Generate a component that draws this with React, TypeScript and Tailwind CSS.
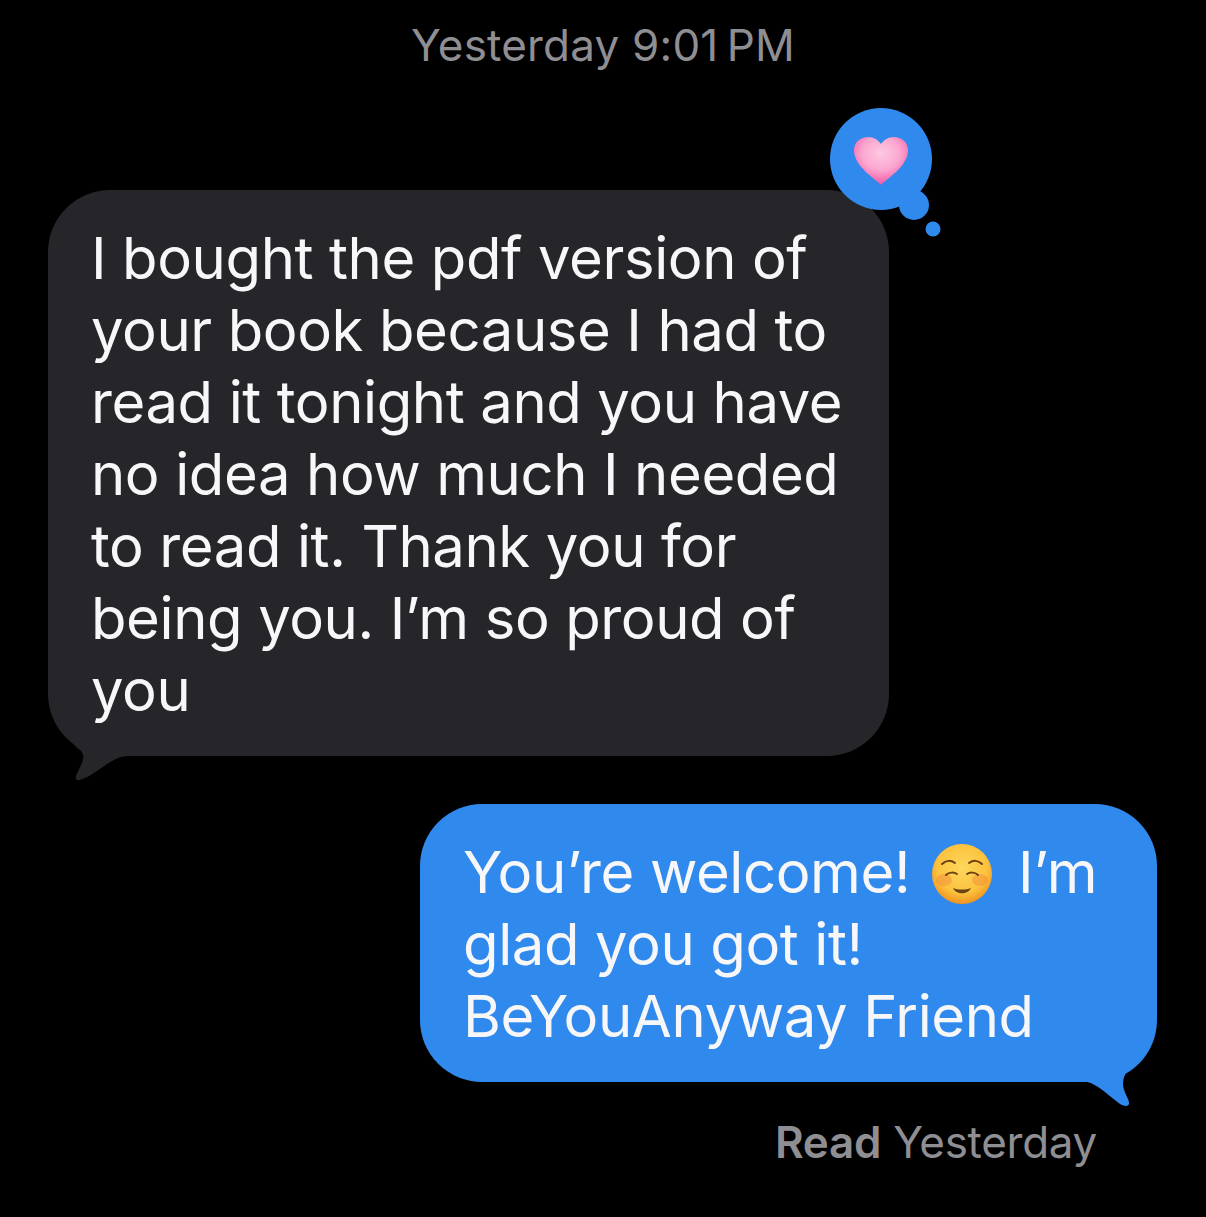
const messageFont = "font-['Inter','Liberation_Sans',sans-serif]"

function IncomingTail() {
  return (
    <svg className="absolute left-0 top-[500px] h-[100px] w-[100px]" viewBox="0 0 100 100" fill="#25252a">
      <path d="M19 46 C23 52 28 57 32 60 C35 63 36 66 35 69 C34 75 30 80 28 86 C27 89 29 91 32 90 C45 86 58 73 70 68 C75 66 80 66 90 66 L90 30 Z" />
    </svg>
  )
}

function OutgoingTail() {
  return (
    <svg className="absolute right-0 top-[228px] h-[80px] w-[100px]" viewBox="0 0 100 80" fill="#3089ec">
      <path d="M30 50 C40 52 50 62 63 72 C66 74 71 75 72 72 C73 68 66 60 66 52 C66 42 72 36 80 31 C88 25 93 16 96 6 L30 0 Z" />
    </svg>
  )
}

function HeartTapback() {
  return (
    <svg className="absolute left-[782px] top-[-82px] h-[130px] w-[112px]" viewBox="0 0 112 130">
      <defs>
        <radialGradient id="heartFill" cx="50%" cy="34%" r="70%">
          <stop offset="0%" stopColor="#fcc9e1" />
          <stop offset="50%" stopColor="#fba6d0" />
          <stop offset="100%" stopColor="#ee4c9f" />
        </radialGradient>
      </defs>
      <circle cx="51" cy="51" r="51" fill="#3089ec" />
      <circle cx="84" cy="97" r="15" fill="#3089ec" />
      <circle cx="103" cy="121" r="7.5" fill="#3089ec" />
      <path
        d="M51 77 C46 71 24 59 24 42 C24 34 31 29 38 29 C44 29 48 32 51 36 C54 32 58 29 64 29 C71 29 78 34 78 42 C78 59 56 71 51 77 Z"
        fill="url(#heartFill)"
      />
    </svg>
  )
}

function SmileEmoji() {
  return (
    <svg className="ml-[5px] mr-[9px] inline-block h-[62px] w-[62px] align-[-12px]" viewBox="0 0 62 62">
      <defs>
        <radialGradient id="faceFill" cx="50%" cy="40%" r="60%">
          <stop offset="0%" stopColor="#fdd75c" />
          <stop offset="70%" stopColor="#fcc23d" />
          <stop offset="100%" stopColor="#ef9320" />
        </radialGradient>
      </defs>
      <circle cx="31" cy="31" r="30" fill="url(#faceFill)" />
      <ellipse cx="13" cy="37" rx="8" ry="6" fill="#f0803c" opacity="0.4" />
      <ellipse cx="49" cy="37" rx="8" ry="6" fill="#f0803c" opacity="0.4" />
      <g fill="none" stroke="#6b4313" strokeLinecap="round" strokeWidth="2">
        <path d="M11 21 C15 17 20 17 24 20" />
        <path d="M38 20 C42 17 47 17 51 21" />
        <path d="M15 32 C18 29 23 29 26 31" />
        <path d="M36 31 C39 29 44 29 47 32" />
      </g>
      <path d="M22 45 C27 47 35 47 40 45 C37 52 25 52 22 45 Z" fill="#6b4313" />
    </svg>
  )
}

export default function App() {
  return (
    <div className={`flex h-[1217px] w-[1206px] flex-col overflow-hidden bg-black ${messageFont}`}>
      <p className="mt-[19px] text-center text-[44px] leading-[52px] tracking-[0.2px] text-[#8e8e93]">
        Yesterday 9:01{'\u202f'}PM
      </p>

      <div className="relative ml-[48px] mt-[119px] w-[841px] rounded-[62px] bg-[#25252a] pb-[30px] pl-[43px] pt-[32px] text-[58px] leading-[72px] tracking-[-0.4px] text-[#f7f7f9]">
        <IncomingTail />
        <HeartTapback />
        <div className="relative whitespace-nowrap">
          <div>I bought the pdf version of</div>
          <div>your book because I had to</div>
          <div>read it tonight and you have</div>
          <div>no idea how much I needed</div>
          <div>to read it. Thank you for</div>
          <div>being you. I’m so proud of</div>
          <div>you</div>
        </div>
      </div>

      <div className="relative ml-[420px] mt-[48px] w-[737px] rounded-[62px] bg-[#3089ec] pb-[30px] pl-[43px] pt-[32px] text-[58px] leading-[72px] tracking-[-0.4px] text-[#f7f7f9]">
        <OutgoingTail />
        <div className="relative whitespace-nowrap">
          <div>
            You’re welcome! <SmileEmoji /> I’m
          </div>
          <div>glad you got it!</div>
          <div>BeYouAnyway Friend</div>
        </div>
      </div>

      <p className="mr-[109px] mt-[36px] text-right text-[44px] leading-[48px] tracking-[-0.3px] text-[#8e8e93]">
        <span className="font-semibold">Read</span> Yesterday
      </p>
    </div>
  )
}
